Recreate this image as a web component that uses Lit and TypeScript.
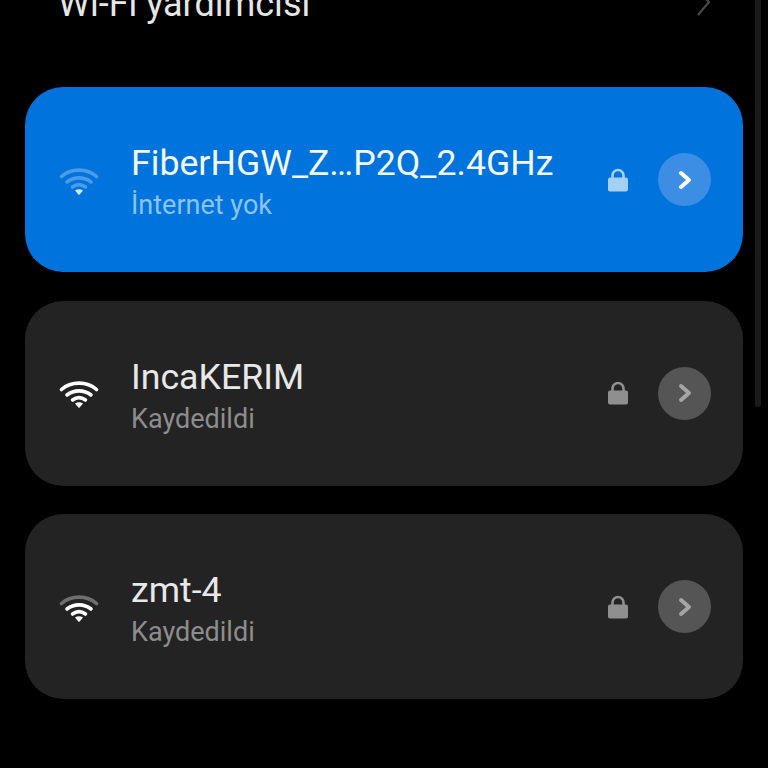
import { LitElement, html, css, svg } from 'lit';
import { customElement } from 'lit/decorators.js';

interface Network {
  name: string;
  status: string;
  weakBar?: boolean;
  active?: boolean;
}

const networks: Network[] = [
  { name: 'FiberHGW_Z…P2Q_2.4GHz', status: 'İnternet yok', active: true },
  { name: 'IncaKERIM', status: 'Kaydedildi' },
  { name: 'zmt-4', status: 'Kaydedildi', weakBar: true },
];

const wifiIcon = (outerOpacity: number, midOpacity: number) => svg`
  <svg class="wifi" viewBox="0 0 40 30" width="40" height="30">
    <g fill="none" stroke="currentColor" stroke-width="3.6" stroke-linecap="round">
      <path d="M2.5 11.5 C12 3 28 3 37.5 11.5" opacity=${outerOpacity} />
      <path d="M8 17 C15 11.5 25 11.5 32 17" opacity=${midOpacity} />
      <path d="M13.5 22 C17.5 19 22.5 19 26.5 22" opacity=${midOpacity} />
    </g>
    <path d="M16 25.6 Q20 23 24 25.6 L20.6 29.4 Q20 30 19.4 29.4 Z" fill="currentColor" />
  </svg>
`;

const lockIcon = svg`
  <svg class="lock" viewBox="0 0 22 24" width="22" height="24">
    <path d="M5.5 11 V7.5 a5.5 5.5 0 0 1 11 0 V11" fill="none" stroke="currentColor" stroke-width="2.6" />
    <rect x="1" y="9.5" width="20" height="14" rx="2" fill="currentColor" />
  </svg>
`;

const chevron = svg`
  <svg viewBox="0 0 16 20" width="16" height="20">
    <path d="M4 3 L12 10 L4 17" fill="none" stroke="currentColor" stroke-width="4" stroke-linecap="round" stroke-linejoin="round" />
  </svg>
`;

@customElement('app-root')
export class AppRoot extends LitElement {
  static styles = css`
    :host {
      display: block;
      height: 768px;
      overflow: hidden;
      background: #000;
      font-family: Roboto, 'Liberation Sans', sans-serif;
      position: relative;
    }

    .assistant {
      display: flex;
      align-items: center;
      justify-content: space-between;
      height: 32px;
      margin-top: -12px;
      padding: 0 56px 0 58px;
      color: #e6e6e6;
      font-size: 36px;
      line-height: 32px;
    }

    .assistant svg {
      color: #4a4a4a;
    }

    .list {
      display: flex;
      flex-direction: column;
      gap: 28.5px;
      margin: 67px 25px 0;
    }

    .card {
      display: flex;
      align-items: center;
      height: 185px;
      padding: 0 32px 0 34px;
      box-sizing: border-box;
      border-radius: 38px;
      background: #232323;
    }

    .card.active {
      background: #0073dd;
    }

    .wifi {
      flex: none;
      color: #fff;
    }

    .active .wifi {
      color: #d5e9fb;
    }

    .text {
      flex: 1;
      margin-left: 32px;
      padding-top: 4px;
      min-width: 0;
    }

    .name {
      color: #e8e8e8;
      font-size: 35.7px;
      line-height: 42px;
      white-space: nowrap;
    }

    .active .name {
      color: #f2f8fe;
    }

    .status {
      margin-top: 5px;
      color: #8d8d8d;
      font-size: 27px;
      line-height: 32px;
    }

    .active .status {
      color: #8cc2f2;
    }

    .lock {
      flex: none;
      color: #8f8f8f;
      margin-right: 29px;
    }

    .active .lock {
      color: #a5d0f5;
    }

    .go {
      flex: none;
      display: flex;
      align-items: center;
      justify-content: center;
      width: 53px;
      height: 53px;
      border-radius: 50%;
      background: #555;
      color: #a5a5a5;
    }

    .active .go {
      background: #3b8ee4;
      color: #fff;
    }

    .scrollbar {
      position: absolute;
      top: 0;
      right: 7px;
      width: 6px;
      height: 407px;
      border-radius: 0 0 3px 3px;
      background: #1a1a1a;
    }
  `;

  render() {
    return html`
      <div class="assistant">
        <span>Wi-Fi yardımcısı</span>
        <svg viewBox="0 0 16 26" width="16" height="26">
          <path d="M2 1 L13 11 L2 24" fill="none" stroke="currentColor" stroke-width="2" />
        </svg>
      </div>
      <div class="list">
        ${networks.map(
          (n) => html`
            <div class="card ${n.active ? 'active' : ''}">
              ${wifiIcon(n.active || n.weakBar ? 0.35 : 1, n.active ? 0.35 : 1)}
              <div class="text">
                <div class="name">${n.name}</div>
                <div class="status">${n.status}</div>
              </div>
              ${lockIcon}
              <div class="go">${chevron}</div>
            </div>
          `
        )}
      </div>
      <div class="scrollbar"></div>
    `;
  }
}
